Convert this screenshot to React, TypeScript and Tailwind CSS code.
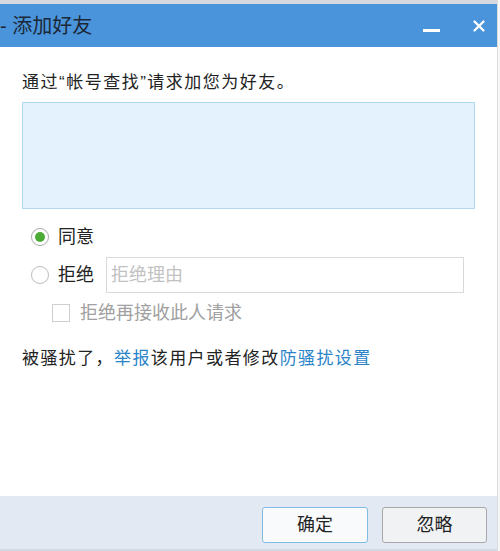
import { X } from "lucide-react";

const font = { fontFamily: '"Liberation Sans", "Noto Sans CJK SC", sans-serif' };

export default function App() {
  return (
    <div
      className="w-[500px] h-[551px] flex bg-white text-[#222]"
      style={font}
    >
      <div className="w-[497px] flex flex-col">
        {/* top strip */}
        <div className="h-[4px] bg-[#d5d9de]" />

        {/* Title bar */}
        <div className="h-[43px] bg-[#4a94dc] flex items-center">
          <span className="text-[20px] leading-none text-[#1c2836]">
            - 添加好友
          </span>
          <div className="ml-auto flex items-center">
            <div className="w-[17px] h-[3px] bg-white mt-[10px] mr-[30px]" />
            <X className="w-[18px] h-[18px] text-white mr-[9px]" strokeWidth={3} />
          </div>
        </div>

        {/* Body */}
        <div className="flex-1 px-[22px] pt-[24px]">
          <p className="text-[17px] leading-[24px] tracking-[1.5px]">
            通过“帐号查找”请求加您为好友。
          </p>
          <div className="mt-[7px] h-[107px] bg-[#e4f2fd] border border-[#b0d8ef]" />

          {/* agree */}
          <div className="mt-[14px] h-[28px] flex items-center pl-[9px]">
            <div className="w-[18px] h-[18px] rounded-full border border-[#a9a9a9] bg-white flex items-center justify-center">
              <div className="w-[10px] h-[10px] rounded-full bg-[#4bab35]" />
            </div>
            <span className="ml-[9px] text-[18px] leading-none">同意</span>
          </div>

          {/* refuse */}
          <div className="mt-[6px] flex items-center pl-[9px]">
            <div className="w-[18px] h-[18px] rounded-full border border-[#bdbdbd] bg-white" />
            <span className="ml-[9px] text-[18px] leading-none">拒绝</span>
            <div className="ml-[12px] w-[358px] h-[36px] border border-[#d9d9d9] bg-white flex items-center pl-[4px]">
              <span className="text-[18px] leading-none text-[#c2c2c2]">拒绝理由</span>
            </div>
          </div>

          {/* checkbox */}
          <div className="mt-[8px] h-[24px] flex items-center pl-[30px]">
            <div className="w-[18px] h-[18px] border border-[#cfcfcf] bg-white" />
            <span className="ml-[10px] text-[18px] leading-none text-[#a0a0a0]">
              拒绝再接收此人请求
            </span>
          </div>

          <p className="mt-[22px] text-[17px] leading-[24px] tracking-[1.4px]">
            被骚扰了，<span className="text-[#2b84c8]">举报</span>该用户或者修改
            <span className="text-[#2b84c8]">防骚扰设置</span>
          </p>
        </div>

        {/* Footer */}
        <div className="h-[55px] bg-[#e3e9f3] border-b-2 border-[#d2d9e4] flex items-start justify-end pt-[11px] pr-[10px] gap-[14px]">
          <button className="w-[106px] h-[36px] rounded-[3px] border border-[#7fbbe2] bg-[#f8fafc] text-[18px] leading-none text-[#222]">
            确定
          </button>
          <button className="w-[105px] h-[36px] rounded-[3px] border border-[#a8a8a8] bg-[#f1f2f4] text-[18px] leading-none text-[#222]">
            忽略
          </button>
        </div>
      </div>

      {/* right edge */}
      <div className="w-[3px] border-l border-[#dcdcdc] bg-[#f7f7f7]" />
    </div>
  );
}
